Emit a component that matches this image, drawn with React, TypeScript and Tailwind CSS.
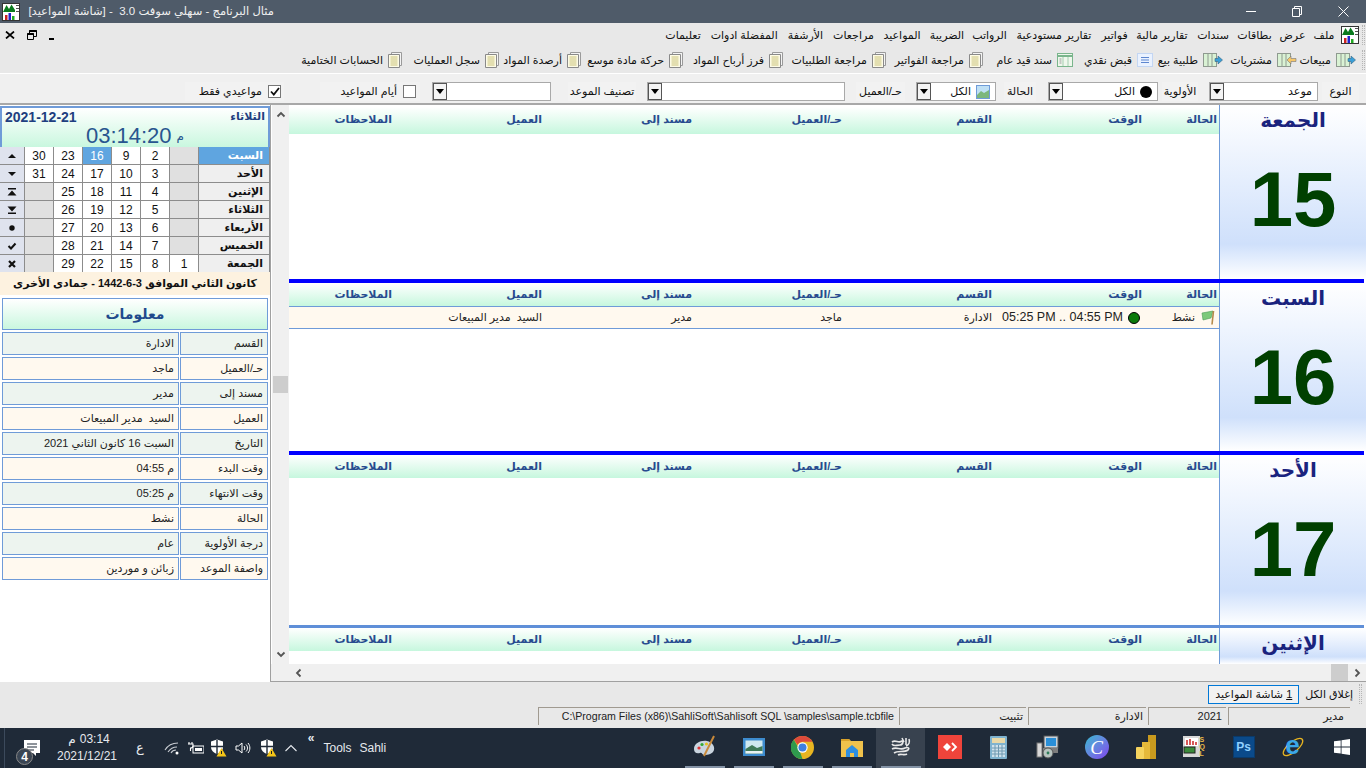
import React from 'react';

const FONT = "[font-family:'Liberation_Sans','DejaVu_Sans',sans-serif]";

const menuItems = [
  { label: 'ملف', cls: 'w-[28px]' },
  { label: 'عرض', cls: 'w-[35px]' },
  { label: 'بطاقات', cls: 'w-[41px]' },
  { label: 'سندات', cls: 'w-[42px]' },
  { label: 'تقارير مالية', cls: 'w-[60px]' },
  { label: 'فواتير', cls: 'w-[35px]' },
  { label: 'تقارير مستودعية', cls: 'w-[86px]' },
  { label: 'الرواتب', cls: 'w-[43px]' },
  { label: 'الضريبة', cls: 'w-[42px]' },
  { label: 'المواعيد', cls: 'w-[48px]' },
  { label: 'مراجعات', cls: 'w-[49px]' },
  { label: 'الأرشفة', cls: 'w-[47px]' },
  { label: 'المفضلة', cls: 'w-[46px]' },
  { label: 'ادوات', cls: 'w-[24px]' },
  { label: 'تعليمات', cls: 'w-[58px]' },
];

const toolItems = [
  { label: 'مبيعات', cls: 'w-[59px]', icon: 'in' },
  { label: 'مشتريات', cls: 'w-[74px]', icon: 'out' },
  { label: 'طلبية بيع', cls: 'w-[70px]', icon: 'in' },
  { label: 'قبض نقدي', cls: 'w-[80px]', icon: 'list' },
  { label: 'سند قيد عام', cls: 'w-[90px]', icon: 'sheet' },
  { label: 'مراجعة الفواتير', cls: 'w-[97px]', icon: 'doc' },
  { label: 'مراجعة الطلبيات', cls: 'w-[103px]', icon: 'doc' },
  { label: 'فرز أرباح المواد', cls: 'w-[100px]', icon: 'doc' },
  { label: 'حركة مادة موسع', cls: 'w-[102px]', icon: 'doc' },
  { label: 'أرصدة المواد', cls: 'w-[82px]', icon: 'doc' },
  { label: 'سجل العمليات', cls: 'w-[97px]', icon: 'doc' },
  { label: 'الحسابات الختامية', cls: 'w-[109px]', icon: 'doc' },
];

const calendar = [
  { name: 'السبت', icon: 'up', days: ['30', '23', '16', '9', '2', ''] },
  { name: 'الأحد', icon: 'down', days: ['31', '24', '17', '10', '3', ''] },
  { name: 'الإثنين', icon: 'top', days: ['', '25', '18', '11', '4', ''] },
  { name: 'الثلاثاء', icon: 'bottom', days: ['', '26', '19', '12', '5', ''] },
  { name: 'الأربعاء', icon: 'dot', days: ['', '27', '20', '13', '6', ''] },
  { name: 'الخميس', icon: 'check', days: ['', '28', '21', '14', '7', ''] },
  { name: 'الجمعة', icon: 'x', days: ['', '29', '22', '15', '8', '1'] },
];

const info = [
  ['القسم', 'الادارة'],
  ['حـ/العميل', 'ماجد'],
  ['مسند إلى', 'مدير'],
  ['العميل', 'السيد  مدير المبيعات'],
  ['التاريخ', 'السبت 16 كانون الثاني 2021'],
  ['وقت البدء', 'م 04:55'],
  ['وقت الانتهاء', 'م 05:25'],
  ['الحالة', 'نشط'],
  ['درجة الأولوية', 'عام'],
  ['واصفة الموعد', 'زبائن و موردين'],
];

const columns = [
  { label: 'الحالة', cls: 'w-[75px]' },
  { label: 'الوقت', cls: 'w-[150px]' },
  { label: 'القسم', cls: 'w-[150px]' },
  { label: 'حـ/العميل', cls: 'w-[150px]' },
  { label: 'مسند إلى', cls: 'w-[150px]' },
  { label: 'العميل', cls: 'w-[150px]' },
  { label: 'الملاحظات', cls: 'w-[103px]' },
];

function AppIcon() {
  return (
    <svg width="18" height="18" viewBox="0 0 18 18">
      <rect x="0.5" y="0.5" width="17" height="17" fill="#fff" stroke="#333" />
      <path d="M1 9 L4.5 2 L7 6 L9.5 1.5 L13 7 L13 9Z" fill="#0a7a1e" />
      <rect x="14" y="2" width="3" height="1" fill="#555" />
      <rect x="14" y="5" width="3" height="1" fill="#555" />
      <rect x="14" y="8" width="3" height="1" fill="#555" />
      <rect x="3" y="12" width="2.5" height="5" fill="#c22" />
      <rect x="6.5" y="10" width="2.5" height="7" fill="#22c" />
      <rect x="10" y="13" width="2.5" height="4" fill="#2a2" />
    </svg>
  );
}

function ToolIcon({ kind }: { kind: string }) {
  if (kind === 'doc') {
    return (
      <svg width="14" height="16" viewBox="0 0 14 16">
        <path d="M3.5 0.5H13.5V13.5H3.5Z" fill="#f4f4f4" stroke="#9a9a9a" />
        <path d="M0.5 2.5H11.5V15.5H0.5Z" fill="#fdfbe6" stroke="#8a8a8a" />
        <path d="M2.5 5H9.5M2.5 7H9.5M2.5 9H9.5M2.5 11H9.5M2.5 13H9.5" stroke="#c9c27a" />
      </svg>
    );
  }
  if (kind === 'list') {
    return (
      <svg width="16" height="14" viewBox="0 0 16 14">
        <rect x="0.5" y="0.5" width="15" height="13" fill="#eaf2ff" stroke="#c3d6f3" />
        <path d="M4 4.5H12M4 7H12M4 9.5H12" stroke="#5d86cf" />
      </svg>
    );
  }
  if (kind === 'sheet') {
    return (
      <svg width="16" height="14" viewBox="0 0 16 14">
        <rect x="0.5" y="0.5" width="15" height="13" fill="#eef7ec" stroke="#7ab58c" />
        <path d="M1 3H15" stroke="#7ab58c" strokeWidth="2" />
        <path d="M6 4V13M11 4V13" stroke="#a5cdb0" />
        <path d="M2.5 6H4.5M2.5 8H4.5M2.5 10H4.5" stroke="#999" />
      </svg>
    );
  }
  const out = kind === 'out';
  return (
    <svg width="20" height="14" viewBox="0 0 20 14">
      <rect x="0.5" y="0.5" width="13" height="13" fill="#d9f2d4" stroke="#8f9a90" />
      <path d="M5 1V13M9 1V13" stroke="#8f9a90" />
      {out ? (
        <path d="M19 5.5H14V3L10 7L14 11V8.5H19Z" fill="#f6c76a" stroke="#777" strokeWidth="0.6" />
      ) : (
        <path d="M12 5.5H15V3L19.5 7L15 11V8.5H12Z" fill="#3a9fd8" stroke="#35647f" strokeWidth="0.6" />
      )}
    </svg>
  );
}

function Gripper() {
  return <div className="h-[20px] w-[3px] shrink-0 border-x border-dotted border-[#b5b5b5]" />;
}

function Combo({ cls, text, icon }: { cls: string; text?: string; icon?: React.ReactNode }) {
  return (
    <div dir="rtl" className={`${cls} flex h-[19px] shrink-0 items-center border border-[#a9a9a9] bg-white`}>
      <div className="flex flex-1 items-center gap-[5px] pr-[5px] text-[11px] text-[#111]">
        {icon}
        <span>{text}</span>
      </div>
      <div className="flex h-[17px] w-[14px] items-center justify-center border border-[#555] bg-[#f4f4f4]">
        <svg width="8" height="5" viewBox="0 0 8 5">
          <path d="M0 0H8L4 5Z" fill="#000" />
        </svg>
      </div>
    </div>
  );
}

function FilterLabel({ cls, text }: { cls: string; text: string }) {
  return (
    <div className={`${cls} flex h-[19px] shrink-0 items-center justify-center bg-[#f2f2f2] text-[11px] text-[#111]`}>
      {text}
    </div>
  );
}

function Check({ checked }: { checked?: boolean }) {
  return (
    <div className="flex h-[13px] w-[13px] shrink-0 items-center justify-center border border-[#777] bg-white">
      {checked && (
        <svg width="10" height="9" viewBox="0 0 10 9">
          <path d="M1 4.5L3.8 7.5L9 1" fill="none" stroke="#111" strokeWidth="1.8" />
        </svg>
      )}
    </div>
  );
}

function NavGlyph({ kind }: { kind: string }) {
  return (
    <svg width="10" height="10" viewBox="0 0 10 10">
      {kind === 'up' && <path d="M1 7H9L5 3Z" fill="#111" />}
      {kind === 'down' && <path d="M1 3H9L5 7Z" fill="#111" />}
      {kind === 'top' && <path d="M1 1H9V2.5H1ZM5 3.5L9.5 8.5H0.5Z" fill="#111" />}
      {kind === 'bottom' && <path d="M0.5 1.5H9.5L5 6.5ZM1 7.5H9V9H1Z" fill="#111" />}
      {kind === 'dot' && <circle cx="5" cy="5" r="2.7" fill="#111" />}
      {kind === 'check' && <path d="M1.5 5L4 7.5L8.5 2.5" fill="none" stroke="#111" strokeWidth="2" />}
      {kind === 'x' && <path d="M2 2L8 8M8 2L2 8" fill="none" stroke="#111" strokeWidth="2.2" />}
    </svg>
  );
}

function Calendar() {
  return (
    <div className="grid grid-cols-[24px_repeat(6,28px)_70px] gap-px bg-[#8c8c8c]">
      {calendar.map((row, r) =>
        [
          <div key={`${r}-n`} className="flex h-[17px] items-center justify-center bg-[#dfe3ee]">
            <NavGlyph kind={row.icon} />
          </div>,
          ...row.days.map((d, i) => {
            const selected = d === '16';
            const empty = d === '';
            return (
              <div
                key={`${r}-${i}`}
                className={`flex h-[17px] items-center justify-center text-[12px] ${
                  selected ? 'bg-[#5fa5e0] text-white' : empty ? 'bg-[#e0e0e0]' : 'bg-white text-[#111]'
                }`}
              >
                {d}
              </div>
            );
          }),
          <div
            key={`${r}-l`}
            dir="rtl"
            className={`flex h-[17px] items-center pr-[6px] text-[11px] font-bold ${
              r === 0 ? 'bg-[#5fa5e0] text-white' : 'bg-[#efefef] text-[#111]'
            }`}
          >
            {row.name}
          </div>,
        ],
      )}
    </div>
  );
}

function SidePanel() {
  return (
    <div className="flex w-[270px] shrink-0 flex-col bg-white pt-px">
      <div className="h-[41px] border-2 border-b-0 border-[#6f9bd8] bg-gradient-to-b from-white to-[#c9f7df] px-[3px]">
        <div className="flex h-[17px] items-center justify-between">
          <span className="text-[14px] leading-none font-bold text-[#1f3f80]">2021-12-21</span>
          <span dir="rtl" className="text-[11px] font-bold text-[#1f3f80]">الثلاثاء</span>
        </div>
        <div className="flex items-center justify-center gap-[5px] text-[22px] leading-[22px] text-[#28558f]">
          <span>03:14:20</span>
          <span className="text-[12px]">م</span>
        </div>
      </div>
      <Calendar />
      <div dir="rtl" className="flex h-[23px] items-center justify-center bg-[#fdf2e0] text-[11px] font-bold text-[#111]">
        كانون الثاني الموافق 3-6-1442 - جمادى الأخرى
      </div>
      <div className="mx-[2px] mt-[3px] flex h-[32px] items-center justify-center border border-[#6f9bd8] bg-gradient-to-b from-white to-[#c9f7df] text-[14px] font-bold text-[#1f4a8c]">
        معلومات
      </div>
      <div className="mx-[2px] mt-px flex flex-col">
        {info.map(([label, value], i) => (
          <div key={label} dir="rtl" className="flex h-[25px] gap-px py-[1px]">
            <div
              className={`flex w-[88px] items-center border border-[#6f9bd8] pr-[4px] text-[11px] text-[#222] ${
                i % 2 === 0 ? 'bg-[#edf4ef]' : 'bg-[#fff9ef]'
              }`}
            >
              {label}
            </div>
            <div
              className={`flex flex-1 items-center whitespace-pre border border-[#6f9bd8] pr-[4px] text-[11px] text-[#222] ${
                i % 2 === 0 ? 'bg-[#edf4ef]' : 'bg-[#fff9ef]'
              }`}
            >
              {value}
            </div>
          </div>
        ))}
      </div>
    </div>
  );
}

function DayRow() {
  return (
    <div dir="rtl" className="flex h-[23px] items-center border-y border-[#6f9bd8] bg-[#fff9ef] pr-[2px] text-[11px] text-[#222]">
      <div className="flex w-[75px] items-center gap-[6px]">
        <svg width="16" height="15" viewBox="0 0 16 15">
          <path d="M1 3L12 1L10 8L2 10Z" fill="#7dc97a" stroke="#4a9a55" strokeWidth="0.6" />
          <path d="M12.5 1L11 14.5" stroke="#b58a4a" strokeWidth="1.6" />
        </svg>
        <span>نشط</span>
      </div>
      <div className="flex w-[150px] items-center gap-[5px] pr-[2px]">
        <span className="h-[12px] w-[12px] shrink-0 rounded-full border border-black bg-[#0a7a0a]" />
        <span dir="ltr" className="text-[12.5px] whitespace-nowrap">05:25 PM .. 04:55 PM</span>
      </div>
      <div className="w-[150px]">الادارة</div>
      <div className="w-[150px]">ماجد</div>
      <div className="w-[150px]">مدير</div>
      <div className="w-[150px] whitespace-pre">السيد  مدير المبيعات</div>
    </div>
  );
}

function DayBlock({
  name,
  num,
  cls,
  line,
  strip,
  row,
}: {
  name: string;
  num?: string;
  cls: string;
  line?: string;
  strip?: string;
  row?: boolean;
}) {
  return (
    <div className="shrink-0">
      {line && <div className={`${line} mr-[2px]`} />}
      <div dir="rtl" className={`flex ${cls}`}>
        <div className="flex w-[147px] shrink-0 flex-col items-center border-l border-[#6f9bd8] bg-gradient-to-b from-white via-[#cfe0fb] via-80% to-white">
          <div dir="rtl" className="flex h-[30px] items-center text-[20px] font-bold text-[#1a237e]">
            {name}
          </div>
          {num && (
            <div className="mt-[25px] text-[78px] leading-[78px] font-bold text-[#004000]">{num}</div>
          )}
        </div>
        <div className="min-w-0 flex-1">
          <div className={`flex items-center bg-gradient-to-b from-white to-[#c6f7de] pr-[2px] text-[11px] font-bold text-[#274b8f] ${strip ?? 'h-[23px]'}`}>
            {columns.map((c) => (
              <div key={c.label} className={`${c.cls} shrink-0`}>
                {c.label}
              </div>
            ))}
          </div>
          {row && <DayRow />}
        </div>
      </div>
    </div>
  );
}

function Chevron({ dir: d }: { dir: string }) {
  return (
    <svg width="10" height="10" viewBox="0 0 10 10">
      <path
        d={d === 'up' ? 'M1.5 6.5L5 3L8.5 6.5' : d === 'down' ? 'M1.5 3.5L5 7L8.5 3.5' : d === 'left' ? 'M6.5 1.5L3 5L6.5 8.5' : 'M3.5 1.5L7 5L3.5 8.5'}
        fill="none"
        stroke="#555"
        strokeWidth="1.8"
      />
    </svg>
  );
}

function Schedule() {
  return (
    <div className="flex min-w-0 flex-1 flex-col border-b border-l border-[#a0a0a0]">
      <div className="flex h-[559px] overflow-hidden">
        <div className="ml-px flex w-[17px] shrink-0 flex-col items-center bg-[#f0f0f0]">
          <div className="flex h-[20px] items-center">
            <Chevron dir="up" />
          </div>
          <div className="mt-[251px] h-[17px] w-[15px] bg-[#cdcdcd]" />
          <div className="mt-[251px] flex h-[20px] items-center">
            <Chevron dir="down" />
          </div>
        </div>
        <div className="min-w-0 flex-1 overflow-hidden bg-white">
          <DayBlock name="الجمعة" num="15" cls="h-[174px]" strip="h-[27px] pb-[3px] mt-[2px]" />
          <DayBlock name="السبت" num="16" cls="h-[168px]" line="h-[4px] bg-[#0000ff]" row />
          <DayBlock name="الأحد" num="17" cls="h-[170px]" line="h-[4px] bg-[#0000ff]" />
          <DayBlock name="الإثنين" cls="h-[36px]" line="h-[3px] bg-[#5f8fd8]" />
        </div>
      </div>
      <div className="flex h-[17px] items-center bg-[#f0f0f0]">
        <div className="ml-[19px] flex w-[17px] justify-center">
          <Chevron dir="left" />
        </div>
        <div className="flex-1" />
        <div className="h-[17px] w-[17px] bg-[#cdcdcd]" />
        <div className="flex w-[18px] justify-center">
          <Chevron dir="right" />
        </div>
      </div>
    </div>
  );
}

function StatusPanel({ cls, text, ltr }: { cls: string; text: string; ltr?: boolean }) {
  return (
    <div dir={ltr ? 'ltr' : 'rtl'} className={`${cls} flex h-[18px] shrink-0 items-center border-t border-l border-[#a09a90] text-[#222]`}>
      {text}
    </div>
  );
}

function TaskIcon({ children, cls, bar }: { children: React.ReactNode; cls?: string; bar?: boolean }) {
  return (
    <div className={`flex h-[40px] w-[49px] shrink-0 flex-col items-center ${cls ?? ''}`}>
      <div className="flex flex-1 items-center justify-center">{children}</div>
      <div className={`h-[2px] w-[40px] ${bar ? 'bg-[#8493a6]' : ''}`} />
    </div>
  );
}

function ShieldWarn() {
  return (
    <svg width="17" height="18" viewBox="0 0 17 18">
      <path d="M1 2.5L7 0.5L13 2.5V8C13 11.5 10 14 7 15C4 14 1 11.5 1 8Z" fill="#fff" />
      <path d="M7 1V15M1 7.5H13" stroke="#1f2a38" strokeWidth="1.4" />
      <path d="M11.5 9L16.5 17.5H6.5Z" fill="#f5c518" />
      <path d="M11.5 12V15" stroke="#222" />
    </svg>
  );
}

function TaskBar() {
  return (
    <div className="flex h-[40px] items-center bg-[#1f2a38] text-[#e6e9ee]">
      <div className="ml-[4px] h-[40px] w-px bg-[#3c4a5c]" />
      <div className="relative ml-[15px] h-[40px] w-[26px]">
        <svg className="mt-[12px] ml-[4px]" width="17" height="17" viewBox="0 0 17 17">
          <path d="M0 0H16V13H12V16L9 13H0Z" fill="#fff" />
          <path d="M3 4H13M3 7H13M3 10H10" stroke="#1f2a38" strokeWidth="1.2" />
        </svg>
        <div className="absolute top-[20px] left-[-4px] flex h-[17px] w-[17px] items-center justify-center rounded-full border border-[#888] bg-[#3a4553] text-[12px] font-bold text-white">
          4
        </div>
      </div>
      <div className="ml-[11px] flex w-[60px] flex-col items-center text-[12px] leading-[17px]">
        <div className="flex gap-[4px] pl-[4px]">
          <span>م</span>
          <span>03:14</span>
        </div>
        <span>2021/12/21</span>
      </div>
      <span className="ml-[19px] text-[13px]">ع</span>
      <svg className="ml-[20px]" width="16" height="14" viewBox="0 0 16 14">
        <path d="M1 9C4 4 9 2 14 2M4 11C6 8 9 6 13 6M7 12C8 10 10 9 12 9" fill="none" stroke="#c8ccd2" strokeWidth="1.1" />
        <circle cx="13" cy="12" r="1.5" fill="#fff" />
      </svg>
      <svg className="ml-[8px]" width="16" height="14" viewBox="0 0 16 14">
        <rect x="5" y="5" width="11" height="7" fill="#1f2a38" stroke="#fff" />
        <rect x="7" y="7" width="7" height="3" fill="#fff" />
        <path d="M1 1V3M4 1V3M0 3H5V5C5 6 4 7 2.5 7V10" fill="none" stroke="#fff" strokeWidth="1.1" />
      </svg>
      <div className="ml-[6px] flex w-[17px]">
        <ShieldWarn />
      </div>
      <svg className="ml-[8px]" width="16" height="14" viewBox="0 0 16 14">
        <path d="M1 5H3.5L7 2V12L3.5 9H1Z" fill="none" stroke="#fff" />
        <path d="M9 5C10 6 10 8 9 9M11 3.5C13 5.5 13 8.5 11 10.5M13 2C15.5 5 15.5 9 13 12" fill="none" stroke="#fff" />
      </svg>
      <div className="ml-[9px] flex w-[17px]">
        <ShieldWarn />
      </div>
      <svg className="ml-[8px]" width="12" height="8" viewBox="0 0 12 8">
        <path d="M0.5 7L6 1.5L11.5 7" fill="none" stroke="#e6e9ee" strokeWidth="1.1" />
      </svg>
      <span className="mb-[20px] ml-[11px] text-[12px] leading-none font-bold">«</span>
      <span className="ml-[9px] text-[12px]">Tools</span>
      <span className="ml-[8px] text-[12px]">Sahli</span>
      <div className="flex-1" />
      <TaskIcon bar>
        <svg width="24" height="24" viewBox="0 0 24 24">
          <path d="M1 14C1 8 8 5 14 6C19 7 22 11 21 15C20 19 15 20 11 20C9 20 9 17 7 18C4 19 1 18 1 14Z" fill="#c9d4de" />
          <circle cx="6" cy="13" r="1.6" fill="#d33" />
          <circle cx="9" cy="9.5" r="1.6" fill="#3a3" />
          <circle cx="13.5" cy="9" r="1.6" fill="#e8c020" />
          <path d="M21 1L11 21" stroke="#c98a3a" strokeWidth="2" />
        </svg>
      </TaskIcon>
      <TaskIcon bar>
        <svg width="22" height="18" viewBox="0 0 22 18">
          <rect width="22" height="18" fill="#3d8ccf" />
          <rect x="2.5" y="2.5" width="17" height="13" fill="#cfe8ef" />
          <path d="M2.5 11L9 7L14 10L19.5 8V15.5H2.5Z" fill="#3f7a58" />
          <path d="M2.5 13H19.5V15.5H2.5Z" fill="#e8f2f2" />
        </svg>
      </TaskIcon>
      <TaskIcon bar>
        <svg width="23" height="23" viewBox="0 0 24 24">
          <circle cx="12" cy="12" r="12" fill="#e8b521" />
          <path d="M12 0A12 12 0 0 1 22.4 6H12A6 6 0 0 0 6.8 9L3.2 3.8A12 12 0 0 1 12 0Z" fill="#dd4a3c" />
          <path d="M3 3.8L8.2 13L12 24A12 12 0 0 1 3 3.8Z" fill="#2f9a4e" />
          <circle cx="12" cy="12" r="5.4" fill="#fff" />
          <circle cx="12" cy="12" r="4.2" fill="#3f7fe0" />
        </svg>
      </TaskIcon>
      <TaskIcon bar>
        <svg width="22" height="19" viewBox="0 0 22 19">
          <path d="M0 1H8L10 3H22V19H0Z" fill="#f0c24c" />
          <path d="M0 1H8L9 3H0Z" fill="#d9a22a" />
          <path d="M5 19V12L11 7L17 12V19H13V15H9V19Z" fill="#2f8fe0" />
        </svg>
      </TaskIcon>
      <TaskIcon bar cls="bg-[#38424f]">
        <svg width="22" height="22" viewBox="0 0 22 22">
          <path d="M2 6C6 3 8 8 12 5C14 4 13 9 10 9C6 9 4 11 2 8M12 2L14 6M16 2V9M19 3C20 6 19 9 16 10M2 13C7 10 10 15 15 12C18 11 20 12 18 14C14 17 8 14 4 17M8 19C11 17 14 20 17 18" fill="none" stroke="#e8e8e8" strokeWidth="1.6" />
        </svg>
      </TaskIcon>
      <TaskIcon>
        <div className="flex h-[24px] w-[24px] items-center justify-center bg-[#ef443b]">
          <svg width="16" height="10" viewBox="0 0 16 10">
            <path d="M1 5L5 1L9 5L5 9Z" fill="#fff" />
            <path d="M10 1L14 5L10 9" fill="none" stroke="#fff" strokeWidth="1.8" />
          </svg>
        </div>
      </TaskIcon>
      <TaskIcon>
        <svg width="17" height="23" viewBox="0 0 17 23">
          <rect width="17" height="23" rx="1" fill="#7fb3cf" />
          <rect x="2" y="2" width="13" height="5" fill="#e9d9a8" />
          <path d="M2 9H15V21H2Z" fill="#cfe2ec" />
          <path d="M2 12H15M2 15H15M2 18H15M5 9V21M8.5 9V21M12 9V21" stroke="#6f9ab2" />
        </svg>
      </TaskIcon>
      <TaskIcon>
        <svg width="24" height="24" viewBox="0 0 24 24">
          <rect x="8" y="1" width="14" height="12" fill="#c8d3dc" stroke="#555" />
          <rect x="10" y="3" width="10" height="8" fill="#2a8fd8" />
          <rect x="1" y="8" width="5" height="14" fill="#d8d8d8" stroke="#777" />
          <rect x="7" y="13" width="15" height="5" fill="#7d7d7d" />
          <circle cx="12" cy="18" r="5" fill="#b8c4c0" stroke="#555" />
          <circle cx="12" cy="18" r="1.4" fill="#2e7d5a" />
        </svg>
      </TaskIcon>
      <TaskIcon>
        <div className="flex h-[24px] w-[24px] items-center justify-center rounded-full bg-gradient-to-br from-[#22b8cf] to-[#7c3aed] font-['Liberation_Serif'] text-[19px] leading-none text-white italic">
          C
        </div>
      </TaskIcon>
      <TaskIcon>
        <svg width="20" height="24" viewBox="0 0 20 24">
          <rect x="12" y="0" width="8" height="24" fill="#c99a1e" />
          <rect x="6" y="7" width="8" height="17" fill="#e5b93a" />
          <rect x="0" y="12" width="8" height="12" rx="1" fill="#f5d35e" />
        </svg>
      </TaskIcon>
      <TaskIcon>
        <div className="flex w-[24px] items-start">
          <svg width="17" height="23" viewBox="0 0 17 23">
            <rect width="17" height="21" fill="#d8d8d8" />
            <rect x="2" y="2" width="13" height="8" fill="#fff" />
            <path d="M4 9V4M7 9V3M10 9V5M13 9V6" stroke="#c22" strokeWidth="1.5" />
            <rect x="1" y="11" width="11" height="6" fill="#3b8a3b" stroke="#222" />
          </svg>
          <div className="text-[7px] leading-[7px] font-bold text-[#e8b84a]">
            S<br />Q<br />L
          </div>
        </div>
      </TaskIcon>
      <TaskIcon>
        <div className="flex h-[22px] w-[22px] items-center justify-center border border-[#0a3a6a] bg-[#0a4a8a] text-[12px] font-bold text-[#8fd0ff]">
          Ps
        </div>
      </TaskIcon>
      <TaskIcon>
        <div className="relative flex h-[24px] w-[24px] items-center justify-center">
          <svg className="absolute inset-0" width="24" height="24" viewBox="0 0 24 24">
            <ellipse cx="12" cy="12" rx="12" ry="5" transform="rotate(-40 12 12)" fill="none" stroke="#e8b521" strokeWidth="1.3" />
          </svg>
          <span className="relative mb-[5px] text-[26px] leading-none font-bold text-[#3aa7e8]">e</span>
        </div>
      </TaskIcon>
      <TaskIcon>
        <svg width="16" height="16" viewBox="0 0 16 16">
          <path d="M0 2.3L6.7 1.4V7.6H0ZM7.5 1.2L16 0V7.6H7.5ZM0 8.4H6.7V14.6L0 13.7ZM7.5 8.4H16V16L7.5 14.8Z" fill="#fff" />
        </svg>
      </TaskIcon>
    </div>
  );
}

export default function App() {
  return (
    <div className={`flex h-[768px] w-[1366px] flex-col overflow-hidden bg-[#e8e8e8] text-[#111] ${FONT}`}>
      {/* title bar */}
      <div className="flex h-[23px] shrink-0 items-center bg-[#4f5b69] text-[#f0f0f0]">
        <div className="ml-[2px] flex w-[22px]">
          <AppIcon />
        </div>
        <div dir="rtl" className="w-[250px] whitespace-pre text-[11.5px]">
          مثال البرنامج - سهلي سوفت 3.0  - [شاشة المواعيد]
        </div>
        <div className="flex-1" />
        <div className="flex h-[23px] w-[46px] items-center justify-center">
          <div className="h-px w-[10px] bg-white" />
        </div>
        <div className="flex h-[23px] w-[46px] items-center justify-center">
          <svg width="10" height="11" viewBox="0 0 10 11">
            <path d="M0.5 2.5H7.5V10.5H0.5ZM2.5 2.5V0.5H9.5V8.5H7.5" fill="none" stroke="#fff" />
          </svg>
        </div>
        <div className="flex h-[23px] w-[46px] items-center justify-center">
          <svg width="11" height="11" viewBox="0 0 11 11">
            <path d="M0.5 0.5L10.5 10.5M10.5 0.5L0.5 10.5" stroke="#fff" />
          </svg>
        </div>
      </div>

      {/* menu */}
      <div className="flex h-[24px] shrink-0 items-center">
        <div className="ml-[5px] flex items-center gap-[12px]">
          <svg width="10" height="8" viewBox="0 0 10 8">
            <path d="M1 0.5L9 7.5M9 0.5L1 7.5" stroke="#000" strokeWidth="1.7" />
          </svg>
          <svg width="10" height="10" viewBox="0 0 10 10">
            <path d="M0.5 3.5H6.5V9.5H0.5ZM2.5 3.5V0.5H9.5V6.5H6.5" fill="none" stroke="#000" />
            <path d="M0.5 4H6.5M2.5 1H9.5" stroke="#000" strokeWidth="2" />
          </svg>
          <div className="mt-[8px] h-[2px] w-[5px] bg-black" />
        </div>
        <div className="flex-1" />
        <div dir="rtl" className="flex items-center">
          <div className="mr-[1px] ml-[3px]">
            <Gripper />
          </div>
          <div className="ml-[3px]">
            <AppIcon />
          </div>
          {menuItems.map((m) => (
            <div key={m.label} className={`${m.cls} flex shrink-0 justify-center whitespace-nowrap text-[11px] text-[#111]`}>
              {m.label}
            </div>
          ))}
        </div>
      </div>

      {/* toolbar */}
      <div dir="rtl" className="flex h-[26px] shrink-0 items-center pr-[1px]">
        <div className="ml-[4px]">
          <Gripper />
        </div>
        {toolItems.map((t) => (
          <div key={t.label} className={`${t.cls} flex shrink-0 items-center gap-[5px] whitespace-nowrap pr-[2px] text-[11px] text-[#111]`}>
            <ToolIcon kind={t.icon} />
            <span>{t.label}</span>
          </div>
        ))}
      </div>

      {/* filters */}
      <div dir="rtl" className="flex h-[32px] shrink-0 items-end border-t border-b-2 border-t-white border-b-[#a8a8a8] bg-[#f0f0f0] pr-[7px] pb-[2px]">
        <FilterLabel cls="w-[37px]" text="النوع" />
        <Combo cls="mr-[4px] w-[109px]" text="موعد" />
        <FilterLabel cls="mr-[11px] w-[36px]" text="الأولوية" />
        <Combo
          cls="mr-[4px] w-[110px]"
          text="الكل"
          icon={<span className="h-[12px] w-[12px] rounded-full bg-black" />}
        />
        <FilterLabel cls="mr-[12px] w-[32px]" text="الحالة" />
        <Combo
          cls="mr-[8px] w-[80px]"
          text="الكل"
          icon={
            <svg width="14" height="14" viewBox="0 0 14 14">
              <rect x="0.5" y="0.5" width="13" height="13" fill="#bfe0f5" stroke="#6f9bd8" />
              <path d="M1 10L5 6L8 8L13 5V13H1Z" fill="#7cb77c" />
            </svg>
          }
        />
        <FilterLabel cls="mr-[11px] w-[49px]" text="حـ/العميل" />
        <Combo cls="mr-[11px] w-[198px]" />
        <FilterLabel cls="mr-[11px] w-[68px]" text="تصنيف الموعد" />
        <Combo cls="mr-[17px] w-[119px]" />
        <div className="mr-[12px] flex h-[19px] w-[100px] shrink-0 items-center gap-[6px] bg-[#f2f2f2] pr-[4px] text-[11px]">
          <Check />
          <span>أيام المواعيد</span>
        </div>
        <div className="mr-[36px] flex h-[19px] w-[99px] shrink-0 items-center gap-[6px] bg-[#f2f2f2] pr-[3px] text-[11px]">
          <Check checked />
          <span>مواعيدي فقط</span>
        </div>
      </div>

      {/* main */}
      <div className="flex h-[577px] shrink-0 bg-white">
        <SidePanel />
        <Schedule />
      </div>

      {/* tabs */}
      <div dir="rtl" className="flex h-[24px] shrink-0 items-center pr-[4px]">
        <Gripper />
        <span className="mr-[6px] text-[11px]">إغلاق الكل</span>
        <div className="mr-[6px] flex h-[19px] w-[91px] items-center justify-center border border-[#0078d7] bg-[#f2f2f2] text-[11px]">
          <span className="underline">1</span>&nbsp;شاشة المواعيد
        </div>
      </div>

      {/* status */}
      <div dir="rtl" className="flex h-[22px] shrink-0 gap-[2px] pt-[1px] pr-[16px]">
        <StatusPanel cls="w-[122px] pr-[6px] text-[11px]" text="مدير" />
        <StatusPanel cls="w-[78px] pr-[4px] text-[11px]" text="2021" />
        <StatusPanel cls="w-[118px] pr-[3px] text-[11px]" text="الادارة" />
        <StatusPanel cls="w-[127px] pr-[3px] text-[11px]" text="تثبيت" />
        <StatusPanel cls="w-[359px] justify-end pr-[3px] text-[10.6px]" text="C:\Program Files (x86)\SahliSoft\Sahlisoft SQL \samples\sample.tcbfile" ltr />
      </div>

      <TaskBar />
    </div>
  );
}
